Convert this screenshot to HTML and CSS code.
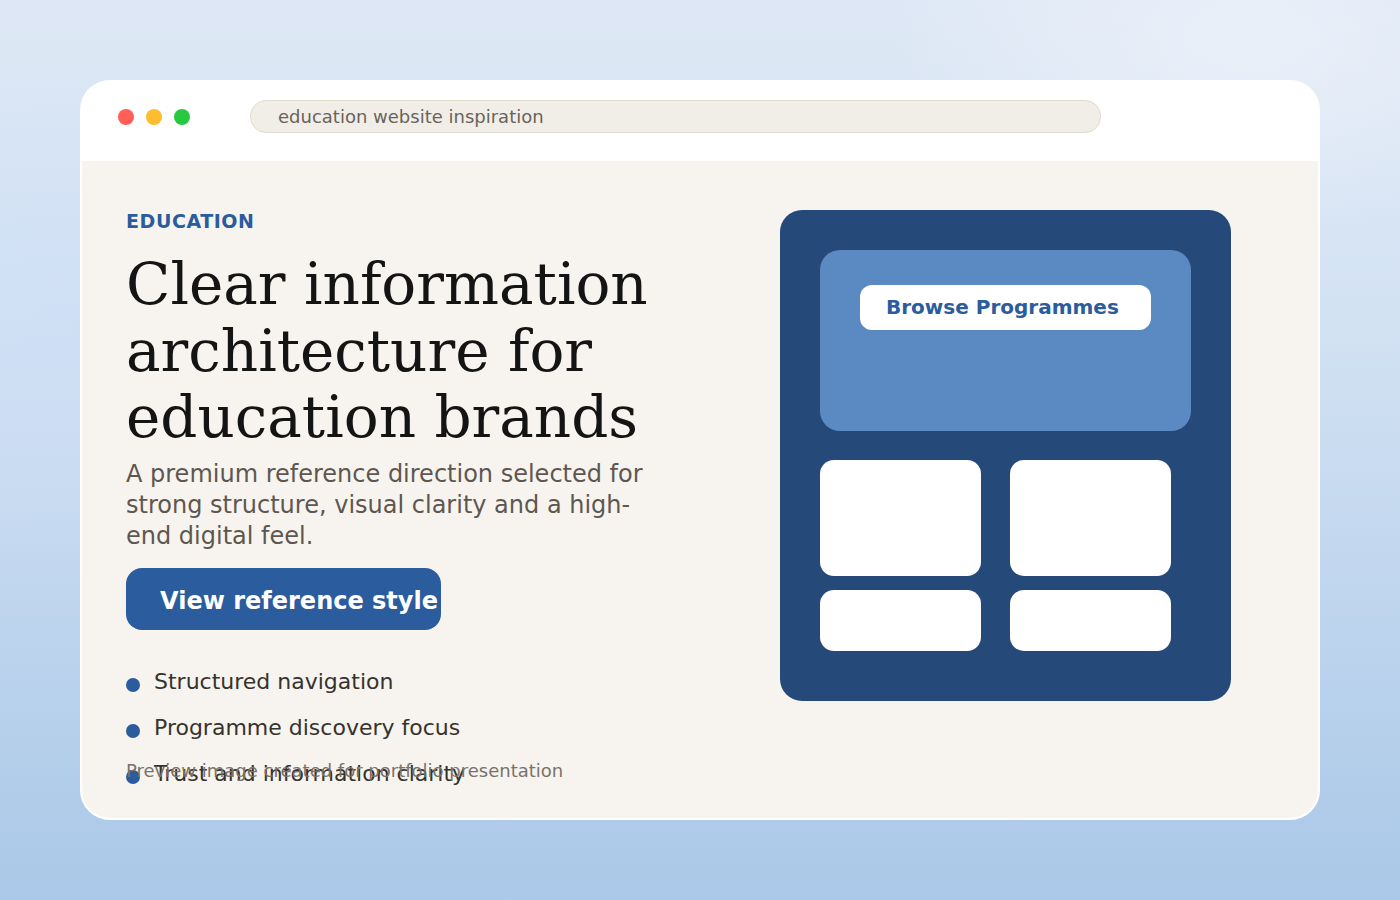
FILE: index.html
```html
<!DOCTYPE html>
<html lang="en">
<head>
<meta charset="utf-8">
<title>Education website inspiration</title>
<link rel="stylesheet" href="styles.css">
</head>
<body>
<div class="stage">
  <div class="window">
    <div class="titlebar">
      <div class="lights">
        <span class="light red"></span>
        <span class="light yellow"></span>
        <span class="light green"></span>
      </div>
      <div class="urlbar">education website inspiration</div>
    </div>
    <div class="content">
      <div class="copy">
        <div class="eyebrow">EDUCATION</div>
        <h1 class="headline">Clear information architecture for education brands</h1>
        <p class="lede">A premium reference direction selected for strong structure, visual clarity and a high-end digital feel.</p>
        <a class="cta" href="#">View reference style</a>
        <ul class="features">
          <li class="feature"><span class="dot"></span><span>Structured navigation</span></li>
          <li class="feature"><span class="dot"></span><span>Programme discovery focus</span></li>
          <li class="feature"><span class="dot"></span><span>Trust and information clarity</span></li>
        </ul>
      </div>
      <div class="mock">
        <div class="mock-hero">
          <div class="mock-pill">Browse Programmes</div>
        </div>
        <div class="mock-grid">
          <div class="tile tall"></div>
          <div class="tile tall"></div>
          <div class="tile short"></div>
          <div class="tile short"></div>
        </div>
      </div>
      <div class="footnote">Preview image created for portfolio presentation</div>
    </div>
  </div>
</div>
</body>
</html>
```

FILE: styles.css
```css
* { box-sizing: border-box; }

html, body {
  margin: 0;
  padding: 0;
}

body {
  width: 1400px;
  height: 900px;
  overflow: hidden;
  font-family: "DejaVu Sans", "Liberation Sans", sans-serif;
  background:
    radial-gradient(ellipse 520px 300px at 1250px 40px, rgba(236, 241, 250, 0.85), rgba(236, 241, 250, 0) 70%),
    radial-gradient(ellipse 600px 360px at 80px 330px, rgba(205, 222, 246, 0.7), rgba(205, 222, 246, 0) 70%),
    linear-gradient(180deg, #dee8f5 0%, #d3e2f3 35%, #c0d6ee 65%, #aac8e8 100%);
}

.stage {
  padding: 80px 80px 0;
}

.window {
  width: 1240px;
  height: 740px;
  background: #ffffff;
  border-radius: 30px;
  padding: 0 2px 2px;
  display: flex;
  flex-direction: column;
}

.titlebar {
  height: 81px;
  flex: none;
  display: flex;
  align-items: flex-start;
  padding: 20px 36px 0;
}

.lights {
  height: 33px;
  display: flex;
  align-items: center;
  gap: 12px;
}

.light {
  width: 16px;
  height: 16px;
  border-radius: 50%;
}

.light.red { background: #ff5f57; }
.light.yellow { background: #febc2e; }
.light.green { background: #28c840; }

.urlbar {
  margin-left: 60px;
  width: 851px;
  height: 33px;
  border-radius: 16px;
  background: #f1eee7;
  border: 1px solid #e2dbcf;
  padding-left: 27px;
  font-size: 18px;
  line-height: 31px;
  color: #6a635b;
}

.content {
  position: relative;
  flex: 1;
  background: #f7f4ef;
  border-radius: 0 0 28px 28px;
  padding: 49px 44px 0;
  display: grid;
  grid-template-columns: 540px 451px;
  column-gap: 114px;
  align-items: start;
}

.eyebrow {
  font-size: 19px;
  line-height: 22px;
  font-weight: bold;
  letter-spacing: 0.03em;
  color: #2a5c9e;
  margin-bottom: 19px;
}

.headline {
  margin: 0;
  font-family: "DejaVu Serif", "Liberation Serif", serif;
  font-weight: normal;
  font-size: 58px;
  line-height: 1.15;
  color: #141414;
}

.lede {
  margin: 8px 0 0;
  font-size: 24px;
  line-height: 31px;
  color: #5e5750;
}

.cta {
  display: block;
  margin-top: 16px;
  width: 315px;
  height: 62px;
  border-radius: 16px;
  background: #2a5c9e;
  color: #ffffff;
  text-decoration: none;
  font-weight: bold;
  font-size: 24px;
  line-height: 58px;
  padding: 4px 0 0 34px;
  white-space: nowrap;
}

.features {
  list-style: none;
  margin: 28px 0 0;
  padding: 0;
}

.feature {
  display: flex;
  align-items: center;
  gap: 14px;
  height: 46px;
  font-size: 22px;
  color: #36322e;
}

.dot {
  width: 14px;
  height: 14px;
  border-radius: 50%;
  background: #2a5c9e;
  flex: none;
  margin-top: 8px;
}

.mock {
  background: #254a7a;
  border-radius: 22px;
  padding: 40px 40px 50px;
}

.mock-hero {
  height: 181px;
  background: #5b8ac2;
  border-radius: 20px;
  padding: 35px 40px 0;
}

.mock-pill {
  width: 291px;
  height: 45px;
  border-radius: 12px;
  background: #ffffff;
  color: #2a5c9e;
  font-weight: bold;
  font-size: 20px;
  line-height: 45px;
  padding-left: 26px;
  white-space: nowrap;
}

.mock-grid {
  margin-top: 29px;
  display: grid;
  grid-template-columns: 161px 161px;
  grid-template-rows: 116px 61px;
  column-gap: 29px;
  row-gap: 14px;
}

.tile {
  background: #ffffff;
  border-radius: 14px;
}

.footnote {
  position: absolute;
  left: 44px;
  bottom: 37px;
  font-size: 18px;
  line-height: 21px;
  color: #7a726a;
}
```
